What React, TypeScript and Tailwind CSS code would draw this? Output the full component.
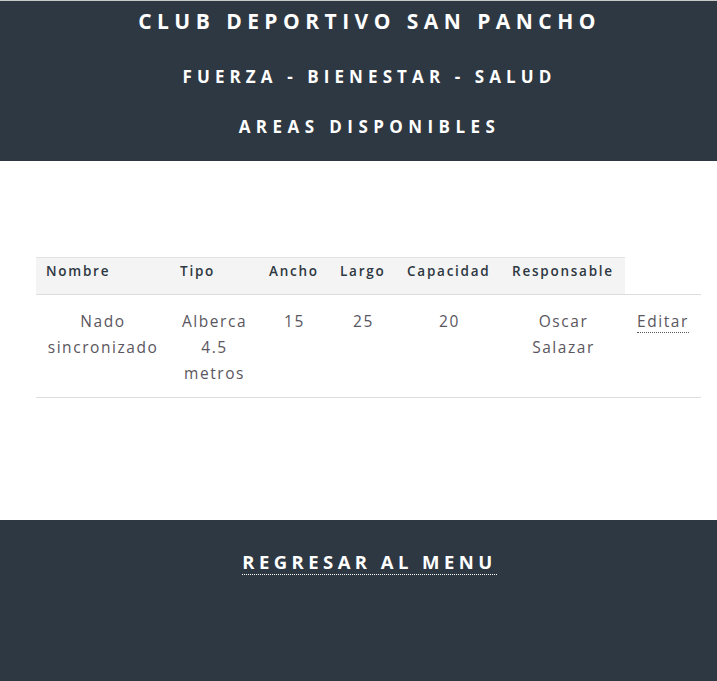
import React from "react";

const cols = [134, 89, 71, 67, 105, 123, 76];
const heads = ["Nombre", "Tipo", "Ancho", "Largo", "Capacidad", "Responsable"];

export default function App() {
  return (
    <div className="min-h-[681px] bg-white flex flex-col" style={{ fontFamily: '"Open Sans", "Liberation Sans", sans-serif' }}>
      <div className="h-px bg-[#c9c9c9]" />
      <header className="bg-[#2e3842] text-white flex flex-col items-center pl-[22px] pt-[5px] h-[160px]">
        <h1 className="text-[21px] leading-[30px] font-bold uppercase tracking-[0.26em]">Club Deportivo San Pancho</h1>
        <h2 className="mt-[28px] text-[17px] leading-[26px] font-bold uppercase tracking-[0.3em]">Fuerza - Bienestar - Salud</h2>
        <h2 className="mt-[24px] text-[17px] leading-[26px] font-bold uppercase tracking-[0.32em]">Areas disponibles</h2>
      </header>
      <main className="h-[359px] pt-[96px]">
        <table className="ml-[36px] w-[665px] table-fixed border-collapse">
          <colgroup>
            {cols.map((w, i) => (
              <col key={i} style={{ width: w }} />
            ))}
          </colgroup>
          <thead>
            <tr className="border-b border-[#dedede]">
              {heads.map((h) => (
                <th key={h} className="bg-[#f4f4f4] border-t border-[#e2e2e2] h-[37px] align-top text-left pl-[10px] pt-px leading-[24px] text-[13.5px] font-semibold tracking-[0.13em] text-[#2e3842]">
                  {h}
                </th>
              ))}
              <th />
            </tr>
          </thead>
          <tbody>
            <tr className="border-b border-[#dedede] text-[#5a565e] text-[15.5px] leading-[26px] tracking-[0.1em] text-center align-top">
              <td className="pt-[13px] pb-[11px]">Nado sincronizado</td>
              <td className="pt-[13px] pb-[11px] px-[8px]">Alberca 4.5 metros</td>
              <td className="pt-[13px] pb-[11px]">15</td>
              <td className="pt-[13px] pb-[11px]">25</td>
              <td className="pt-[13px] pb-[11px]">20</td>
              <td className="pt-[13px] pb-[11px] px-[20px]">Oscar Salazar</td>
              <td className="pt-[13px] pb-[11px]">
                <a href="#" className="border-b border-dotted border-[#5a565e]">Editar</a>
              </td>
            </tr>
          </tbody>
        </table>
      </main>
      <footer className="flex-1 bg-[#2e3842] flex justify-center pl-[22px] pt-[28px] min-h-[161px]">
        <div className="text-[18.5px] leading-[28px] h-[28px]">
          <a href="#" className="text-white font-bold uppercase tracking-[0.24em] border-b border-dotted border-white">Regresar al menu</a>
        </div>
      </footer>
    </div>
  );
}
